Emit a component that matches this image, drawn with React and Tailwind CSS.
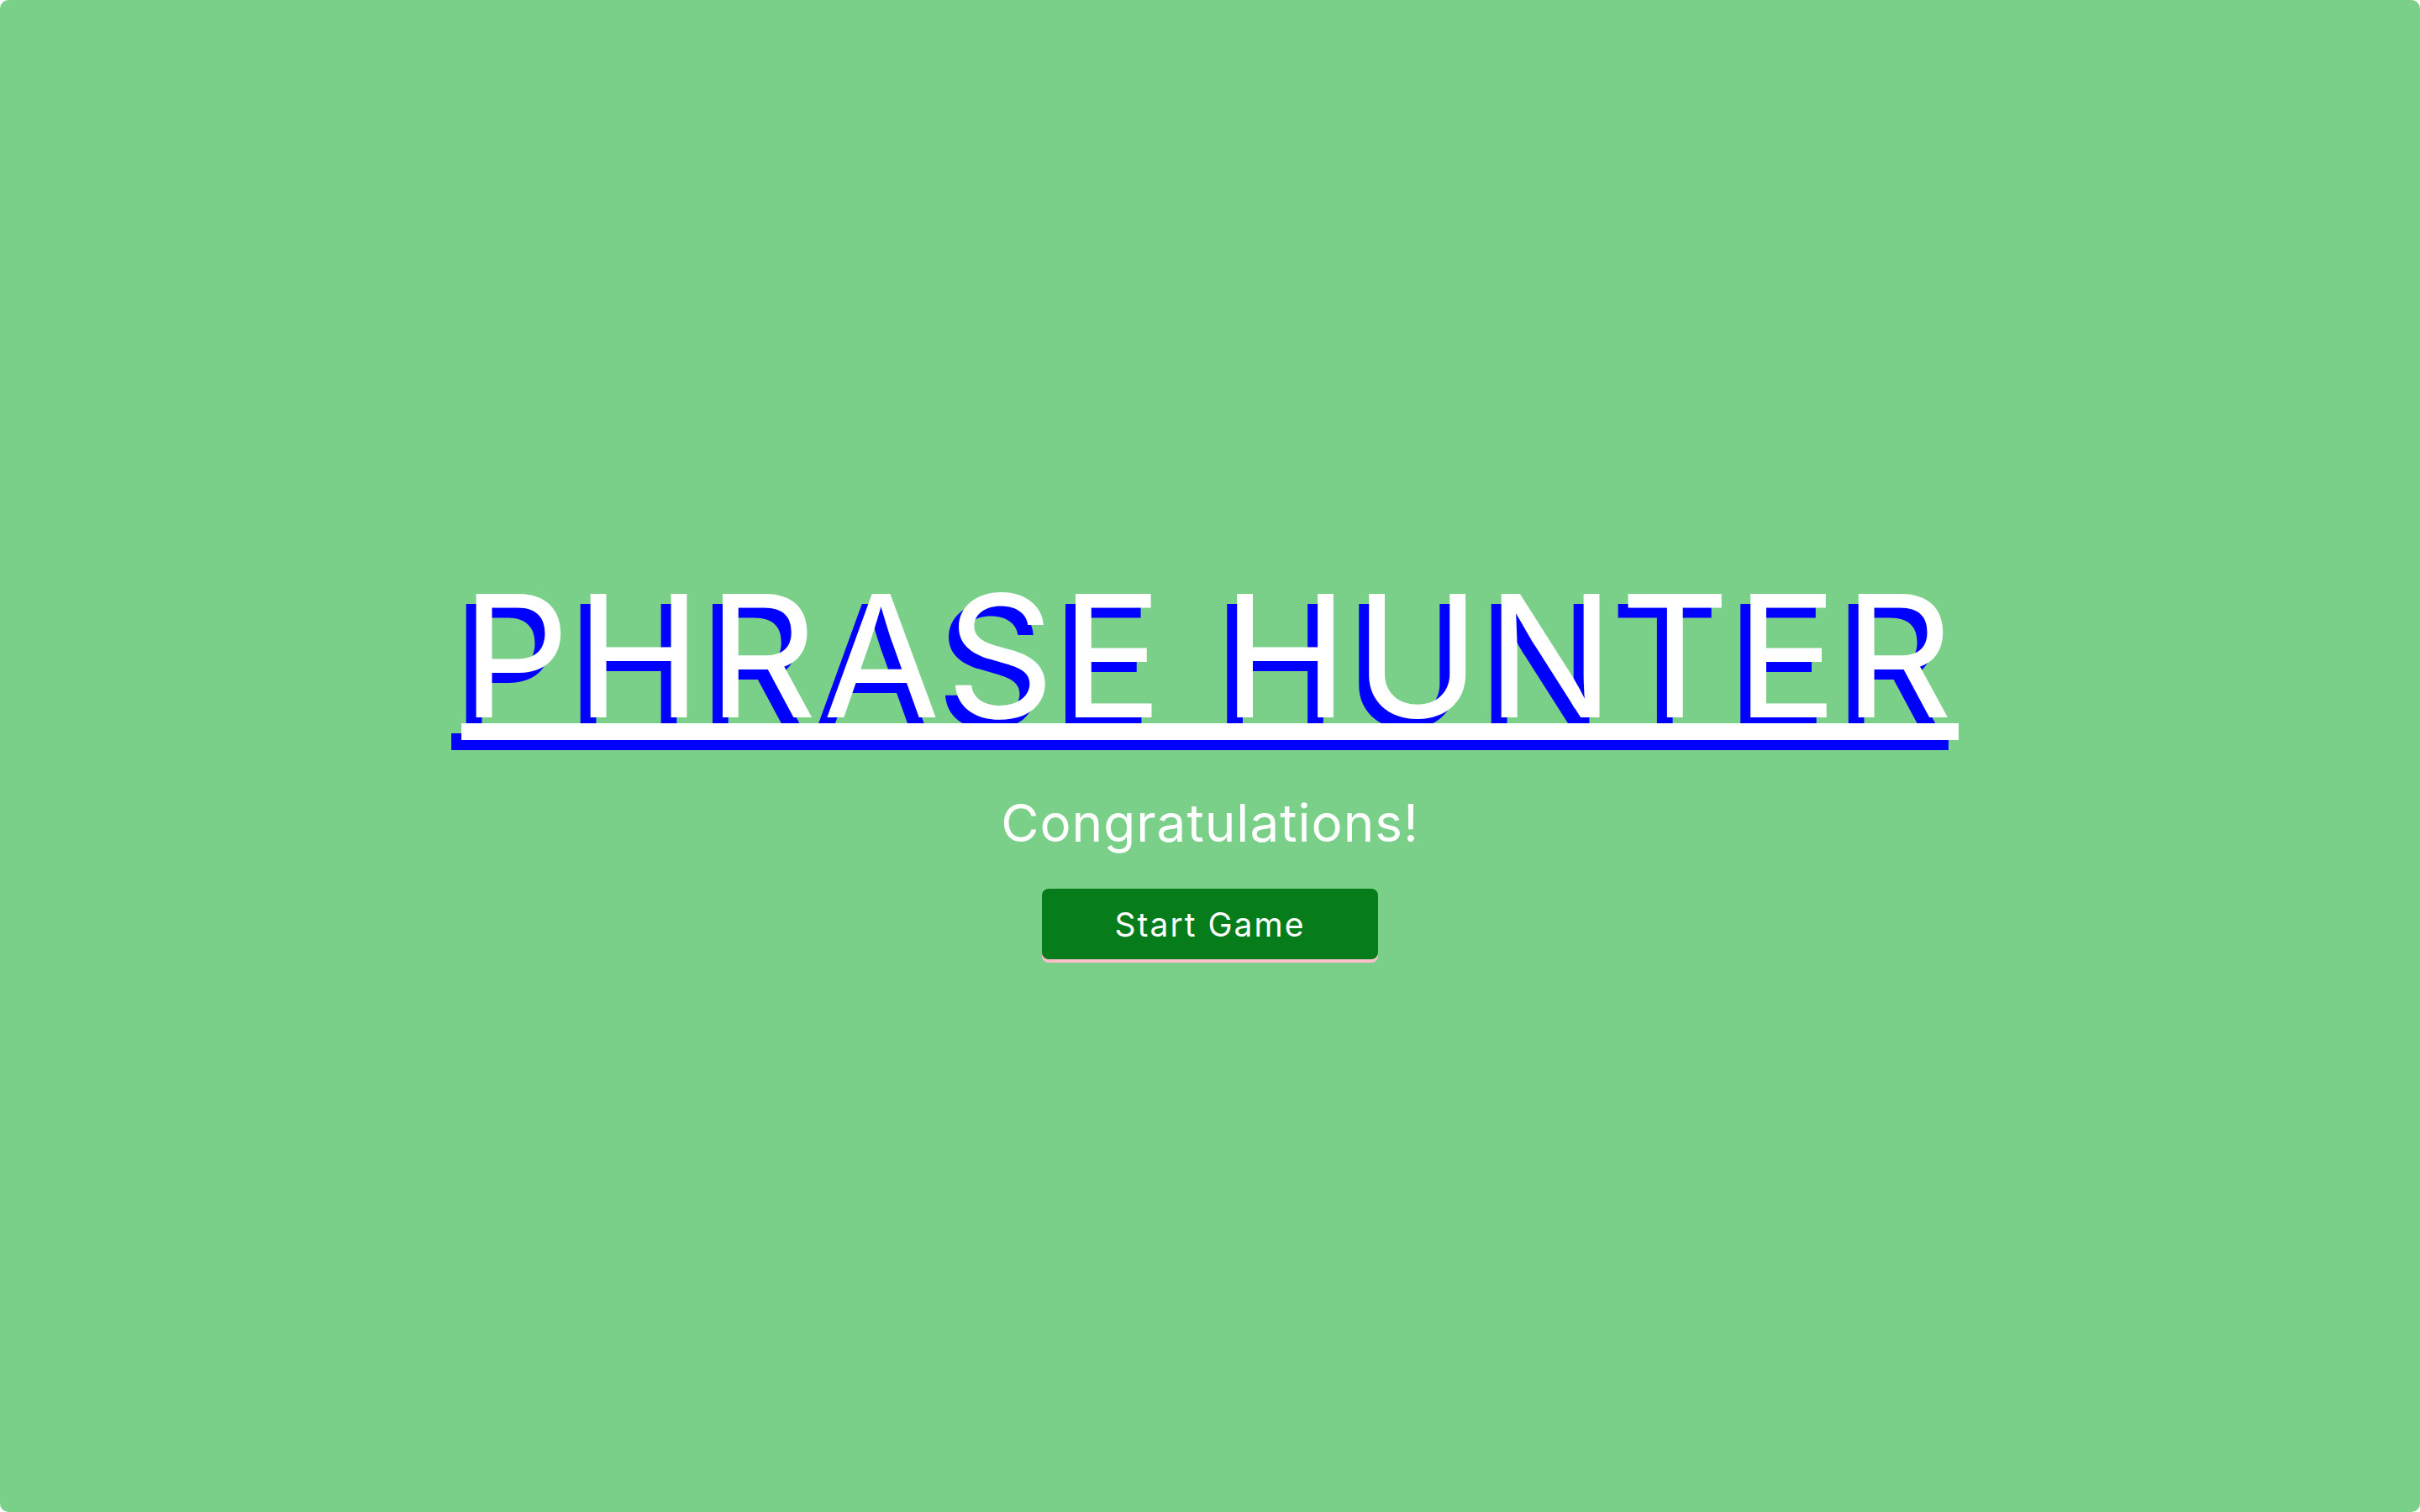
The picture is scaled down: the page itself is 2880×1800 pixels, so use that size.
export default function App() {
  return (
    <div className="w-full h-[1800px] bg-white">
      <div className="w-full h-full rounded-[10px] bg-[#7acf89] flex flex-col items-center pt-[680px] text-white [font-family:Inter,'Noto_Sans',sans-serif]">
        <h1 className="m-0 text-[202px] leading-[202px] font-normal whitespace-nowrap tracking-[7px] underline [text-decoration-thickness:20px] [text-underline-offset:7px] [text-shadow:-12px_12px_0_#0000ff]">
          PHRASE HUNTER
        </h1>
        <h2 className="mt-[67px] text-[62px] leading-[62px] font-normal tracking-[1px]">Congratulations!</h2>
        <button className="mt-[47px] w-[400px] h-[84px] rounded-[8px] bg-[#067d1a] text-white text-[39px] leading-none tracking-[2px] flex items-center justify-center shadow-[0_4px_0_#ffc0cb]">
          Start Game
        </button>
      </div>
    </div>
  );
}
